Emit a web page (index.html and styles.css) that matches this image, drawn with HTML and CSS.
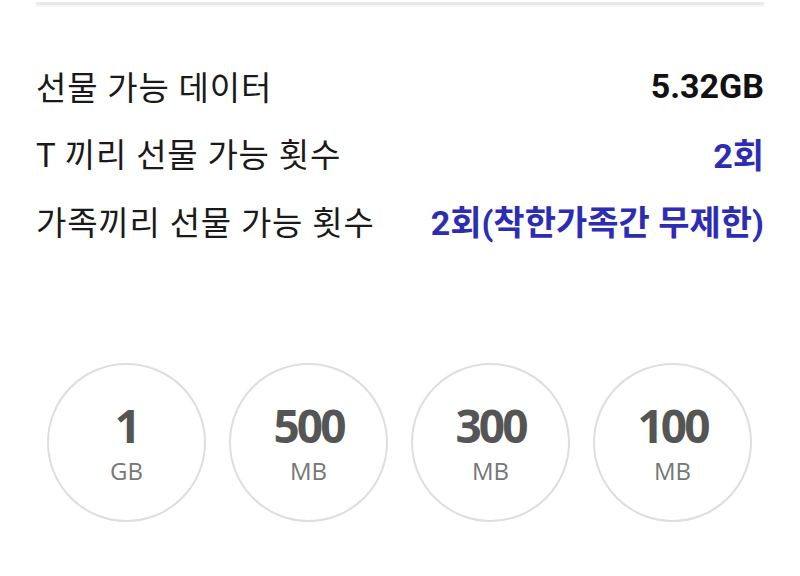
FILE: index.html
```html
<!DOCTYPE html>
<html lang="ko">
<head>
    <meta charset="UTF-8">
    <meta name="viewport" content="width=device-width, initial-scale=1.0">
    <title>데이터 선물</title>
    <link rel="stylesheet" href="styles.css">
</head>
<body>
    <div class="rule"></div>

    <ul class="info">
        <li class="row">
            <span class="label">선물 가능 데이터</span>
            <span class="value">5.32GB</span>
        </li>
        <li class="row">
            <span class="label">T 끼리 선물 가능 횟수</span>
            <span class="value blue">2회</span>
        </li>
        <li class="row">
            <span class="label">가족끼리 선물 가능 횟수</span>
            <span class="value blue">2회(착한가족간 무제한)</span>
        </li>
    </ul>

    <div class="amounts">
        <div class="circle"><span class="num">1</span><span class="unit">GB</span></div>
        <div class="circle"><span class="num">500</span><span class="unit">MB</span></div>
        <div class="circle"><span class="num">300</span><span class="unit">MB</span></div>
        <div class="circle"><span class="num">100</span><span class="unit">MB</span></div>
    </div>
</body>
</html>
```

FILE: styles.css
```css
body {
    margin: 0;
    background: #fff;
    font-family: Roboto, "Noto Sans CJK KR", sans-serif;
    color: #1a1a1a;
}

.rule {
    height: 3px;
    margin: 2px 36px 0;
    background: #e9e9e9;
    border-bottom: 2px solid #f7f7f7;
}

.info {
    list-style: none;
    margin: 45px 36px 0;
    padding: 0;
}

.row {
    display: flex;
    justify-content: space-between;
    align-items: center;
    height: 67.5px;
}

.label {
    font-size: 33px;
    letter-spacing: 0.8px;
}

.value {
    font-size: 34px;
    font-weight: 700;
    color: #111;
}

.value.blue {
    color: #2d2db3;
}

.amounts {
    display: flex;
    gap: 23px;
    margin: 108px 0 0 47px;
}

.circle {
    width: 155px;
    height: 155px;
    border: 2px solid #dedede;
    border-radius: 50%;
    display: flex;
    flex-direction: column;
    align-items: center;
    justify-content: center;
}

.num {
    font-family: "Open Sans", "Noto Sans", sans-serif;
    font-size: 46px;
    font-weight: 700;
    letter-spacing: -3px;
    color: #555;
    line-height: 48px;
    margin-top: 2px;
}

.unit {
    font-family: "Open Sans", "Noto Sans", sans-serif;
    font-size: 24px;
    color: #777;
    line-height: 28px;
    margin-top: 8px;
}
```
